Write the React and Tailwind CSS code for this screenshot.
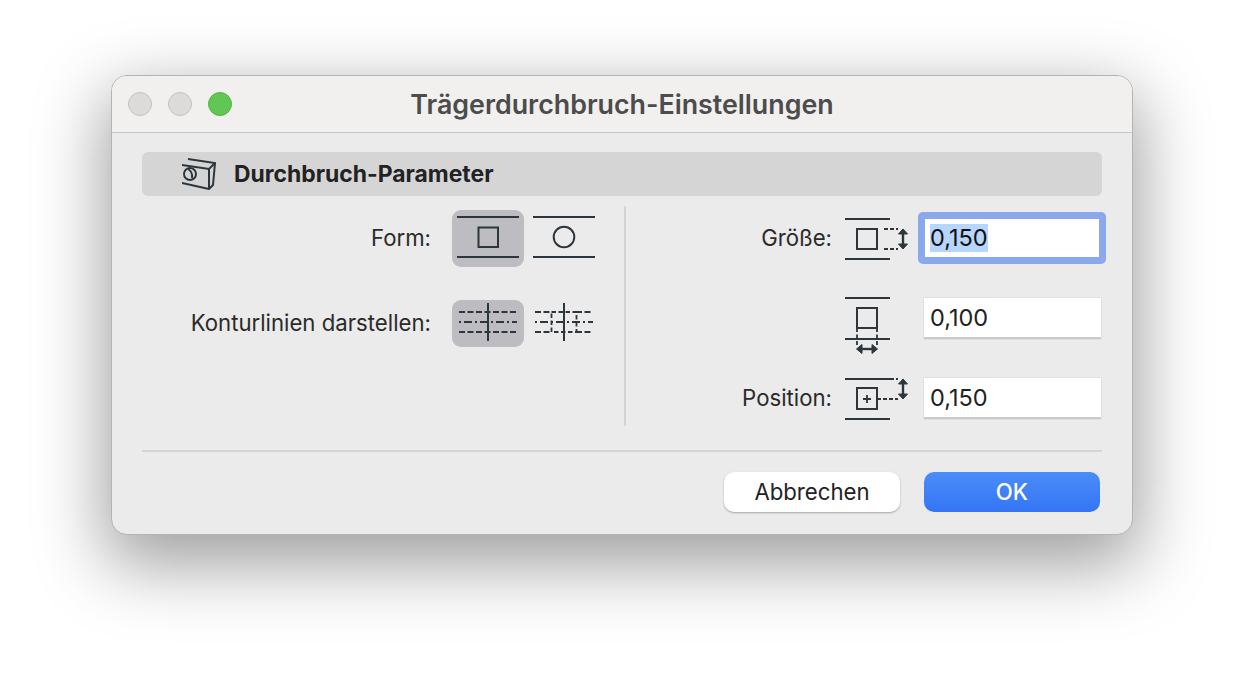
import React from "react";

const C = "#2c363c";
const Ico = ({ w, h, children, className = "" }) => (
  <svg width={w} height={h} viewBox={`0 0 ${w} ${h}`} fill="none" stroke={C} strokeWidth="2" className={`block shrink-0 ${className}`}>
    {children}
  </svg>
);

const Light = ({ color, border }) => (
  <div className="w-6 h-6 rounded-full border" style={{ backgroundColor: color, borderColor: border }} />
);

const Seg = ({ active, h, children }) => (
  <div className={`w-[72px] flex items-center justify-center rounded-[9px] ${active ? "bg-[#bdbcc0]" : ""}`} style={{ height: h }}>
    {children}
  </div>
);

const Field = ({ children }) => (
  <div className="w-[177px] h-[41px] bg-white border-b-2 border-[#c9c9c9] shadow-[0_0_1px_rgba(0,0,0,0.25)] flex items-center pl-[6px] text-[23.5px] text-[#222]">
    {children}
  </div>
);

const Head = () => (
  <svg width="36" height="32" viewBox="0 0 36 32" fill="none" stroke={C} strokeWidth="2" className="block shrink-0">
    <path d="M6 1 L33 5 L31 27 L27 31 L0 25" />
    <path d="M0 7 L27 11 L33 5" />
    <path d="M27 11 V31" />
    <circle cx="8" cy="16" r="6" />
    <path d="M6 11 Q11 14 10 20" />
  </svg>
);

const labelClass = "text-right text-[22.2px] text-[#2a2a2a]";

export default function App() {
  return (
    <div className="w-[1244px] h-[682px] bg-white overflow-hidden pl-[111px] pt-[75px]" style={{ fontFamily: "Inter, 'Noto Sans', sans-serif" }}>
      <div className="w-[1022px] h-[460px] rounded-[16px] bg-[#ebebeb] border border-[#b4b4b4] shadow-[0_24px_70px_6px_rgba(0,0,0,0.38)] overflow-hidden flex flex-col">
        <div className="h-[57px] shrink-0 bg-[#f1f0ee] border-b border-[#c8c8c8] relative flex items-center justify-center">
          <div className="absolute left-[16px] top-[16px] flex gap-4">
            <Light color="#dcdbd9" border="#c4c3c1" />
            <Light color="#dcdbd9" border="#c4c3c1" />
            <Light color="#60c654" border="#52b347" />
          </div>
          <div className="text-[26.8px] font-semibold text-[#4c4c4c]">Trägerdurchbruch-Einstellungen</div>
        </div>

        <div className="pl-[30px] pr-[30px] pt-[19px] flex flex-col grow">
          <div className="h-[44px] w-[960px] rounded-[6px] bg-[#d5d5d5] flex items-center pl-[40px] gap-[16px]">
            <Head />
            <div className="text-[22.9px] font-bold text-[#222]">Durchbruch-Parameter</div>
          </div>

          <div className="flex mt-[10px] h-[220px]">
            <div className="w-[484px] border-r-2 border-[#d4d4d4] shrink-0 pt-[4px] flex flex-col gap-[33px]">
              <div className="flex items-center">
                <div className={`w-[289px] pb-[2px] ${labelClass}`}>Form:</div>
                <div className="ml-[21px] flex gap-[4px]">
                  <Seg active h={57}>
                    <Ico w={72} h={57}>
                      <path d="M5 7H67M5 47H67" />
                      <rect x="26.5" y="17.5" width="19.5" height="19.5" />
                    </Ico>
                  </Seg>
                  <Seg h={57}>
                    <Ico w={72} h={57}>
                      <path d="M5 7H67M5 47H67" />
                      <circle cx="36" cy="27" r="10.3" />
                    </Ico>
                  </Seg>
                </div>
              </div>
              <div className="flex items-center">
                <div className={`w-[289px] pb-[2px] ${labelClass}`}>Konturlinien darstellen:</div>
                <div className="ml-[21px] flex gap-[4px]">
                  <Seg active h={47}>
                    <Ico w={72} h={47}>
                      <path d="M36 3V41" />
                      <path d="M7 12H65M7 32H65" strokeDasharray="6 2.5" strokeWidth="1.8" />
                      <path d="M7 22H65" strokeDasharray="2 3 8 3" strokeWidth="1.8" />
                    </Ico>
                  </Seg>
                  <Seg h={47}>
                    <Ico w={72} h={47}>
                      <path d="M36 3V41" />
                      <path d="M7 12H23M48 12H65M7 32H23M48 32H65" strokeDasharray="6 2.5" strokeWidth="1.8" />
                      <path d="M7 22H65" strokeDasharray="2 3 8 3" strokeWidth="1.8" />
                      <rect x="23.5" y="12" width="25" height="20" strokeDasharray="4.5 2.5" strokeWidth="1.8" />
                    </Ico>
                  </Seg>
                </div>
              </div>
            </div>

            <div className="grow flex flex-col pt-[6px]">
              <div className="flex items-center h-[52px]">
                <div className={`w-[206px] shrink-0 ${labelClass}`}>Größe:</div>
                <div className="ml-[12px]">
                  <Ico w={64} h={46}>
                    <path d="M1 4H46M1 44H46" />
                    <rect x="13" y="14" width="20" height="20" />
                    <path d="M40 14H54M40 34H54" strokeDasharray="4 2" strokeWidth="1.8" />
                    <path d="M59 17V31" strokeWidth="2.4" />
                    <path d="M54.5 19L59 14L63.5 19ZM54.5 29L59 34L63.5 29Z" fill={C} strokeWidth="1" />
                  </Ico>
                </div>
                <div className="ml-[10px] w-[188px] h-[52px] rounded-[5px] bg-[#8ba8ec] p-[7px] shrink-0">
                  <div className="w-full h-full bg-white flex items-center pl-[5px] text-[23.5px] text-[#111]">
                    <span className="bg-[#b8d5fd] h-[28px] flex items-center">0,150</span>
                  </div>
                </div>
              </div>
              <div className="flex items-start h-[60px] mt-[34px]">
                <div className="w-[206px] shrink-0" />
                <div className="ml-[12px] -mt-[3px]">
                  <Ico w={64} h={60}>
                    <path d="M1 3H46M1 44H46" />
                    <rect x="13" y="13" width="20" height="20" />
                    <path d="M13 33V52M33 33V52" strokeDasharray="4 2.5" strokeWidth="1.8" />
                    <path d="M16 54H30" strokeWidth="2.4" />
                    <path d="M18 49.5L12.5 54L18 58.5ZM28 49.5L33.5 54L28 58.5Z" fill={C} strokeWidth="1" />
                  </Ico>
                </div>
                <div className="ml-[16px]"><Field>0,100</Field></div>
              </div>
              <div className="flex items-center h-[41px] mt-[20px]">
                <div className={`w-[206px] pb-[1px] shrink-0 ${labelClass}`}>Position:</div>
                <div className="ml-[12px]">
                  <Ico w={64} h={47}>
                    <path d="M1 4H46M1 44H46" />
                    <path d="M46 4H54M33 24H54" strokeDasharray="4 2" strokeWidth="1.8" />
                    <rect x="13" y="13" width="20" height="21" />
                    <path d="M19 24H27M23 20V28" strokeWidth="1.8" />
                    <path d="M59 7V21" strokeWidth="2.4" />
                    <path d="M54.5 9L59 4L63.5 9ZM54.5 19L59 24L63.5 19Z" fill={C} strokeWidth="1" />
                  </Ico>
                </div>
                <div className="ml-[16px]"><Field>0,150</Field></div>
              </div>
            </div>
          </div>

          <div className="h-[2px] w-[960px] bg-[#d6d6d6] mt-[24px]" />

          <div className="flex justify-end gap-[24px] w-[958px] mt-[20px]">
            <div className="w-[176px] h-[40px] rounded-[10px] bg-white shadow-[0_1px_2px_rgba(0,0,0,0.3)] flex items-center justify-center text-[22.2px] text-[#222]">Abbrechen</div>
            <div className="w-[176px] h-[40px] rounded-[10px] bg-gradient-to-b from-[#4b8cf8] to-[#3475f6] flex items-center justify-center text-[22.2px] font-medium text-white">OK</div>
          </div>
        </div>
      </div>
    </div>
  );
}
